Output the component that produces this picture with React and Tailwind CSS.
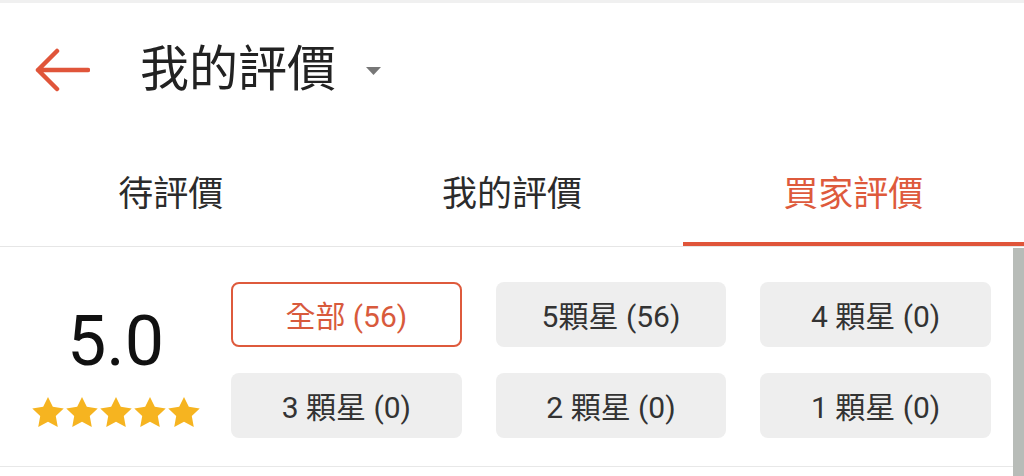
const filters = [
    { label: '全部 (56)', active: true },
    { label: '5顆星 (56)' },
    { label: '4 顆星 (0)' },
    { label: '3 顆星 (0)' },
    { label: '2 顆星 (0)' },
    { label: '1 顆星 (0)' },
]

const tabs = ['待評價', '我的評價', '買家評價']

function Star() {
    return (
        <svg width="34" height="33" viewBox="0 0 24 23">
            <path
                d="M12 0.5l3.4 7 7.7 1.1-5.6 5.4 1.4 7.7L12 18l-6.9 3.7 1.4-7.7L0.9 8.6l7.7-1.1z"
                fill="#f6b420"
            />
        </svg>
    )
}

export default function App() {
    return (
        <div
            className="relative h-[476px] w-[1024px] overflow-hidden bg-white"
            style={{ fontFamily: "Roboto, 'Noto Sans CJK TC', sans-serif" }}
        >
            <div className="h-[3px] bg-[#f0f0f0]" />

            <div className="flex h-[137px] items-start pt-[42px]">
                <div className="flex h-[50px] w-[140px] items-center pl-[34px]">
                    <svg width="56" height="46" viewBox="0 0 56 46">
                        <path
                            d="M54 23H4M23 4L4 23l19 19"
                            fill="none"
                            stroke="#e0553a"
                            strokeWidth="4.5"
                            strokeLinecap="round"
                            strokeLinejoin="round"
                        />
                    </svg>
                </div>
                <h1 className="text-[49px] leading-[50px] font-normal text-[#222]">
                    我的評價
                </h1>
                <svg className="mt-[22px] ml-[30px]" width="15" height="8" viewBox="0 0 15 8">
                    <path d="M0 0h15L7.5 8z" fill="#777" />
                </svg>
            </div>

            <div className="flex h-[107px] border-b border-[#e6e6e6]">
                {tabs.map((tab, i) => (
                    <div
                        key={tab}
                        className={`flex flex-1 items-center justify-center border-b-[4px] pt-[8px] text-[35px] ${
                            i === 2
                                ? 'border-[#e0553a] text-[#de5a3c]'
                                : 'border-transparent text-[#2b2b2b]'
                        }`}
                    >
                        {tab}
                    </div>
                ))}
            </div>

            <div className="flex h-[220px] items-center border-b border-[#e8e8e8] pr-[33px]">
                <div className="flex w-[231px] flex-col items-center pt-[22px]">
                    <div className="text-[70px] leading-[70px] text-[#111]">5.0</div>
                    <div className="mt-[20px] flex">
                        {[0, 1, 2, 3, 4].map((i) => (
                            <Star key={i} />
                        ))}
                    </div>
                </div>

                <div className="grid flex-1 grid-cols-3 gap-x-[34px] gap-y-[26px] pt-[7px]">
                    {filters.map((f) => (
                        <div
                            key={f.label}
                            className={`flex h-[65px] items-center justify-center rounded-[8px] pt-[4px] text-[30px] ${
                                f.active
                                    ? 'border-2 border-[#de5a3c] bg-white text-[#d85a3c]'
                                    : 'bg-[#eeeeee] text-[#333]'
                            }`}
                        >
                            {f.label}
                        </div>
                    ))}
                </div>
            </div>

            <div className="absolute top-[248px] right-0 h-[228px] w-[11px] bg-[#b8bcb8]" />
        </div>
    )
}
